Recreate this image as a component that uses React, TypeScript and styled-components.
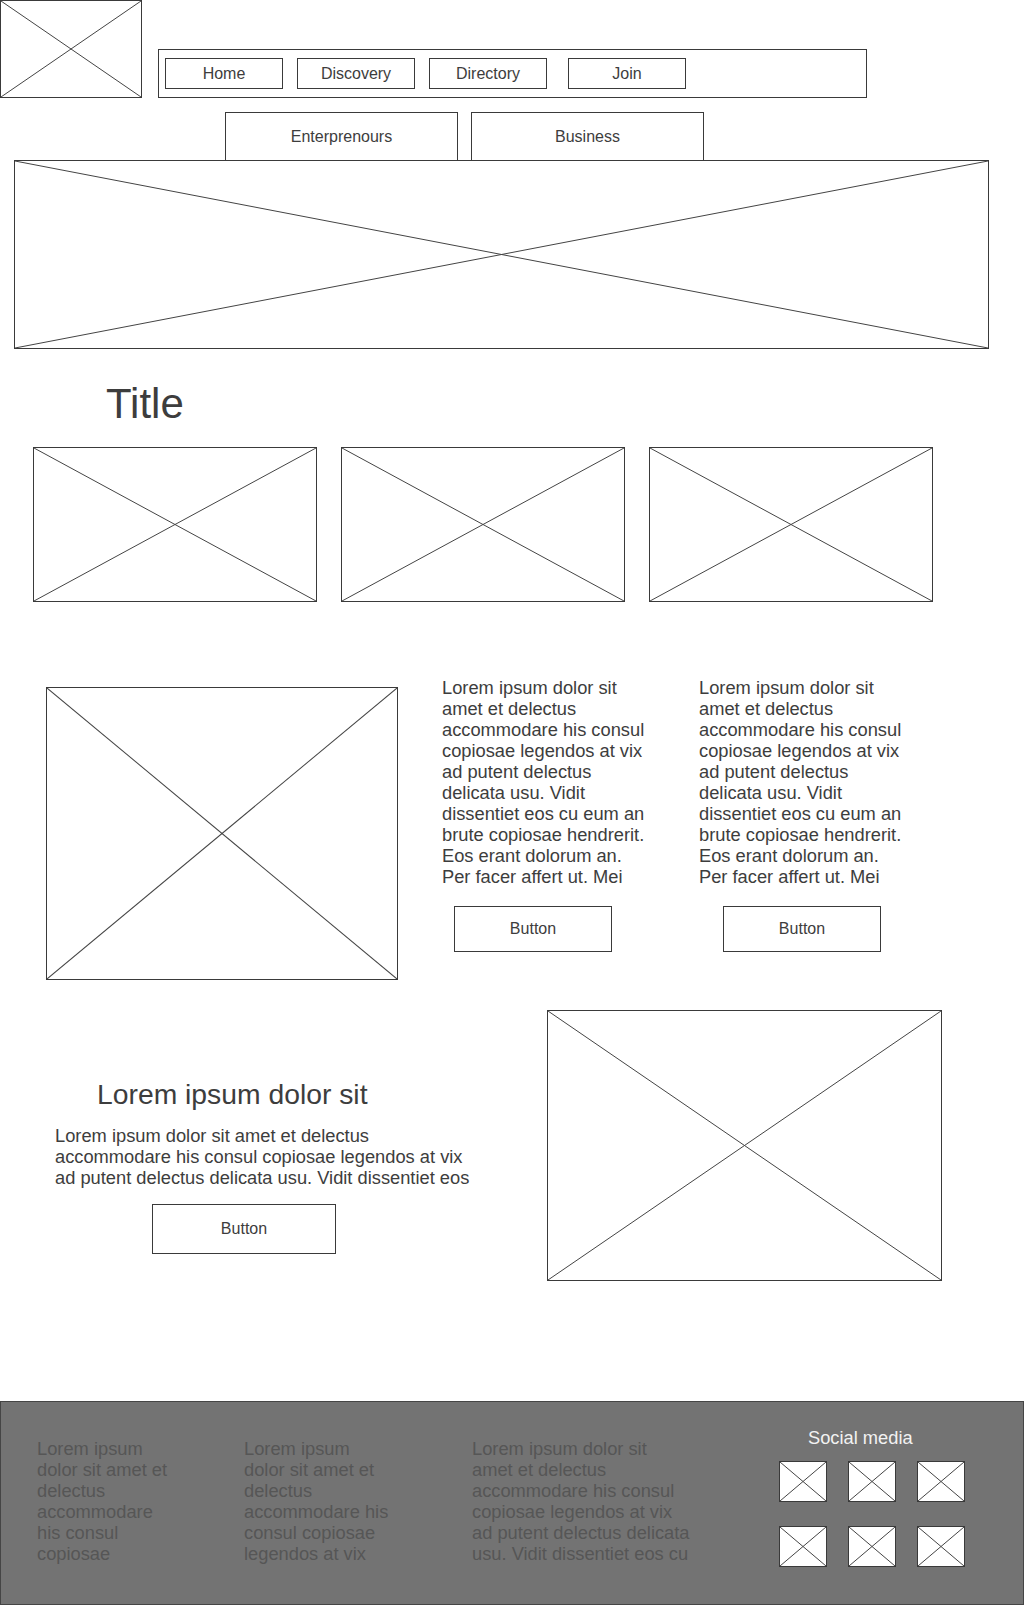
import React from 'react';
import styled, { createGlobalStyle } from 'styled-components';

const GlobalStyle = createGlobalStyle`
  * { box-sizing: border-box; }
  body {
    margin: 0;
    background: #ffffff;
    font-family: "Liberation Sans", Arial, sans-serif;
    color: #3d3d3d;
  }
`;

const lorem =
  'Lorem ipsum dolor sit amet et delectus accommodare his consul copiosae legendos at vix ad putent delectus delicata usu. Vidit dissentiet eos cu eum an brute copiosae hendrerit. Eos erant dolorum an. Per facer affert ut. Mei';

const footerTexts = [
  { width: 137, text: 'Lorem ipsum dolor sit amet et delectus accommodare his consul copiosae' },
  { width: 149, text: 'Lorem ipsum dolor sit amet et delectus accommodare his consul copiosae legendos at vix' },
  { width: 220, text: 'Lorem ipsum dolor sit amet et delectus accommodare his consul copiosae legendos at vix ad putent delectus delicata usu. Vidit dissentiet eos cu' },
];

function Placeholder({ w, h, light }: { w: number; h: number; light?: boolean }) {
  return (
    <Frame $w={w} $h={h} $light={light}>
      <svg width="100%" height="100%" viewBox="0 0 100 100" preserveAspectRatio="none">
        <line x1="0" y1="0" x2="100" y2="100" stroke="#444" strokeWidth="1" vectorEffect="non-scaling-stroke" />
        <line x1="100" y1="0" x2="0" y2="100" stroke="#444" strokeWidth="1" vectorEffect="non-scaling-stroke" />
      </svg>
    </Frame>
  );
}

export default function App() {
  return (
    <Page>
      <GlobalStyle />
      <Header>
        <Placeholder w={142} h={98} />
        <NavBar>
          <NavButton>Home</NavButton>
          <NavButton>Discovery</NavButton>
          <NavButton>Directory</NavButton>
          <NavButton $gap={21}>Join</NavButton>
        </NavBar>
      </Header>

      <Tabs>
        <Tab>Enterprenours</Tab>
        <Tab>Business</Tab>
      </Tabs>
      <Hero>
        <Placeholder w={975} h={189} />
      </Hero>

      <Title>Title</Title>
      <CardRow>
        <Placeholder w={284} h={155} />
        <Placeholder w={284} h={155} />
        <Placeholder w={284} h={155} />
      </CardRow>

      <FeatureRow>
        <FeatureImage>
          <Placeholder w={352} h={293} />
        </FeatureImage>
        <TextColumn>
          <BodyText $width={212}>{lorem}</BodyText>
          <OutlineButton $w={158} $h={46} $indent={12}>Button</OutlineButton>
        </TextColumn>
        <TextColumn>
          <BodyText $width={212}>{lorem}</BodyText>
          <OutlineButton $w={158} $h={46} $indent={24}>Button</OutlineButton>
        </TextColumn>
      </FeatureRow>

      <PromoRow>
        <PromoText>
          <PromoHeading>Lorem ipsum dolor sit</PromoHeading>
          <BodyText $width={431}>
            Lorem ipsum dolor sit amet et delectus accommodare his consul copiosae legendos at vix ad putent delectus
            delicata usu. Vidit dissentiet eos
          </BodyText>
          <OutlineButton $w={184} $h={50} $indent={97}>Button</OutlineButton>
        </PromoText>
        <Placeholder w={395} h={271} />
      </PromoRow>

      <Footer>
        {footerTexts.map((col, i) => (
          <FooterText key={i} $width={col.width}>
            {col.text}
          </FooterText>
        ))}
        <Social>
          <SocialTitle>Social media</SocialTitle>
          <SocialGrid>
            {Array.from({ length: 6 }).map((_, i) => (
              <Placeholder key={i} w={48} h={41} light />
            ))}
          </SocialGrid>
        </Social>
      </Footer>
    </Page>
  );
}

const Page = styled.div`
  width: 1024px;
  min-height: 1605px;
  display: flex;
  flex-direction: column;
`;

const Frame = styled.div<{ $w: number; $h: number; $light?: boolean }>`
  width: ${p => p.$w}px;
  height: ${p => p.$h}px;
  flex-shrink: 0;
  border: 1px solid #3a3a3a;
  background: ${p => (p.$light ? '#ffffff' : 'transparent')};

  svg {
    display: block;
  }
`;

const Header = styled.header`
  display: flex;
  align-items: flex-start;
`;

const NavBar = styled.nav`
  display: flex;
  align-items: center;
  width: 709px;
  height: 49px;
  margin: 49px 0 0 16px;
  padding: 0 0 0 6px;
  border: 1px solid #3a3a3a;
`;

const NavButton = styled.div<{ $gap?: number }>`
  display: flex;
  align-items: center;
  justify-content: center;
  width: 118px;
  height: 31px;
  margin-left: ${p => (p.$gap ?? 14)}px;
  border: 1px solid #3a3a3a;
  font-size: 16px;

  &:first-child {
    margin-left: 0;
  }
`;

const Tabs = styled.div`
  display: flex;
  gap: 13px;
  padding-left: 225px;
  margin-top: 14px;
`;

const Tab = styled.div`
  display: flex;
  align-items: center;
  justify-content: center;
  width: 233px;
  height: 48px;
  border: 1px solid #3a3a3a;
  border-bottom: none;
  font-size: 16px;
`;

const Hero = styled.div`
  padding-left: 14px;
`;

const Title = styled.h1`
  margin: 31px 0 0 106px;
  font-size: 42px;
  line-height: 48px;
  font-weight: 400;
`;

const CardRow = styled.div`
  display: flex;
  gap: 24px;
  margin-top: 19px;
  padding-left: 33px;
`;

const FeatureRow = styled.section`
  display: flex;
  align-items: flex-start;
  margin-top: 75px;
  padding-left: 46px;
  gap: 44px;
`;

const FeatureImage = styled.div`
  margin-top: 10px;
`;

const TextColumn = styled.div`
  display: flex;
  flex-direction: column;
  gap: 19px;

  & + & {
    margin-left: 1px;
  }
`;

const BodyText = styled.p<{ $width: number }>`
  margin: 0;
  width: ${p => p.$width}px;
  font-size: 18.3px;
  line-height: 21px;
`;

const OutlineButton = styled.div<{ $w: number; $h: number; $indent: number }>`
  display: flex;
  align-items: center;
  justify-content: center;
  width: ${p => p.$w}px;
  height: ${p => p.$h}px;
  margin-left: ${p => p.$indent}px;
  border: 1px solid #3a3a3a;
  font-size: 16px;
`;

const PromoRow = styled.section`
  display: flex;
  align-items: flex-start;
  gap: 61px;
  margin-top: 30px;
  padding-left: 55px;
`;

const PromoText = styled.div`
  display: flex;
  flex-direction: column;
  width: 431px;
  margin-top: 67px;

  ${OutlineButton} {
    margin-top: 16px;
  }
`;

const PromoHeading = styled.h2`
  margin: 0 0 14px 42px;
  font-size: 28.3px;
  line-height: 34px;
  font-weight: 400;
`;

const Footer = styled.footer`
  display: flex;
  align-items: flex-start;
  margin-top: 120px;
  height: 204px;
  padding: 25px 0 0 36px;
  background: #737373;
  border: 1px solid #454545;
`;

const FooterText = styled.p<{ $width: number }>`
  margin: 11px 0 0 0;
  width: ${p => p.$width}px;
  font-size: 18.3px;
  line-height: 21px;
  color: #565656;

  & + & {
    margin-left: 70px;
  }

  &:nth-child(3) {
    margin-left: 79px;
  }
`;

const Social = styled.div`
  display: flex;
  flex-direction: column;
  margin-left: 87px;
`;

const SocialTitle = styled.div`
  margin-left: 29px;
  font-size: 18.3px;
  line-height: 21px;
  color: #f2f2f2;
`;

const SocialGrid = styled.div`
  display: grid;
  grid-template-columns: repeat(3, 48px);
  column-gap: 21px;
  row-gap: 24px;
  margin-top: 13px;
`;
